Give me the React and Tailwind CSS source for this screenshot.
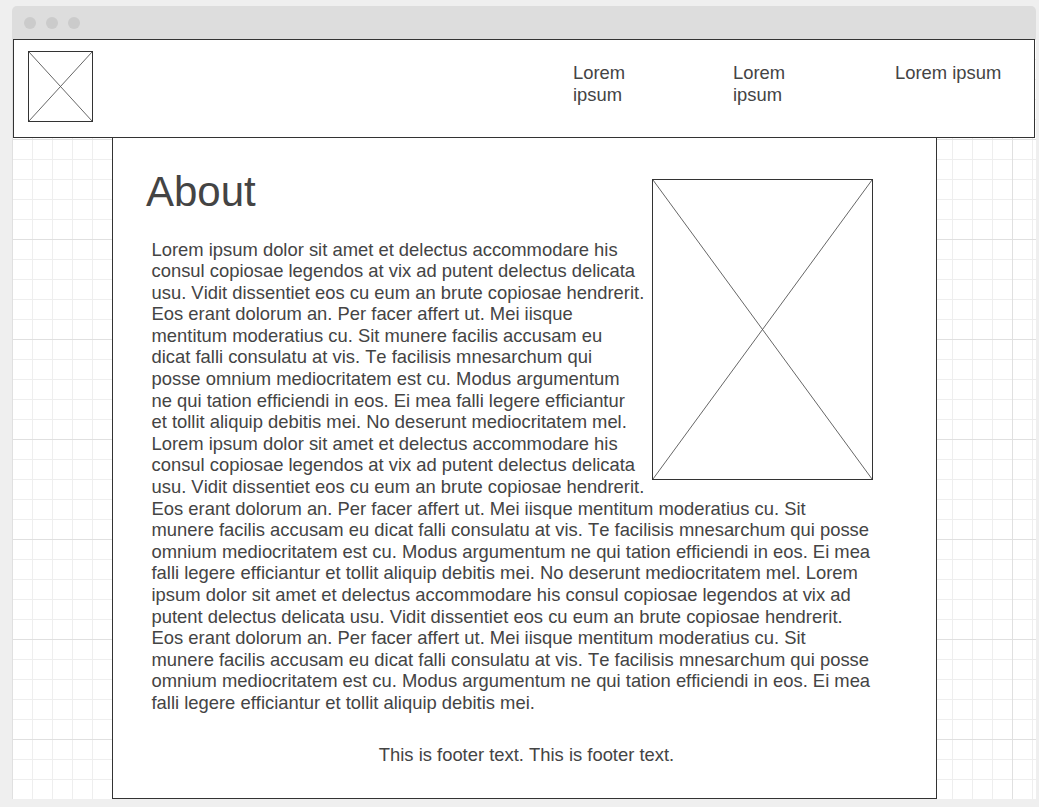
import React from 'react'

const para =
  'Lorem ipsum dolor sit amet et delectus accommodare his consul copiosae legendos at vix ad putent delectus delicata usu. Vidit dissentiet eos cu eum an brute copiosae hendrerit. Eos erant dolorum an. Per facer affert ut. Mei iisque mentitum moderatius cu. Sit munere facilis accusam eu dicat falli consulatu at vis. Te facilisis mnesarchum qui posse omnium mediocritatem est cu. Modus argumentum ne qui tation efficiendi in eos. Ei mea falli legere efficiantur et tollit aliquip debitis mei. No deserunt mediocritatem mel. Lorem ipsum dolor sit amet et delectus accommodare his consul copiosae legendos at vix ad putent delectus delicata usu. Vidit dissentiet eos cu eum an brute copiosae hendrerit. Eos erant dolorum an. Per facer affert ut. Mei iisque mentitum moderatius cu. Sit munere facilis accusam eu dicat falli consulatu at vis. Te facilisis mnesarchum qui posse omnium mediocritatem est cu. Modus argumentum ne qui tation efficiendi in eos. Ei mea falli legere efficiantur et tollit aliquip debitis mei. No deserunt mediocritatem mel. Lorem ipsum dolor sit amet et delectus accommodare his consul copiosae legendos at vix ad putent delectus delicata usu. Vidit dissentiet eos cu eum an brute copiosae hendrerit. Eos erant dolorum an. Per facer affert ut. Mei iisque mentitum moderatius cu. Sit munere facilis accusam eu dicat falli consulatu at vis. Te facilisis mnesarchum qui posse omnium mediocritatem est cu. Modus argumentum ne qui tation efficiendi in eos. Ei mea falli legere efficiantur et tollit aliquip debitis mei.'

// crossed-out box used for every image placeholder
function Placeholder({ w, h, className = '' }) {
  return (
    <svg width={w} height={h} className={className} viewBox={`0 0 ${w} ${h}`}>
      <rect x="0.5" y="0.5" width={w - 1} height={h - 1} fill="white" stroke="#333" strokeWidth="1" />
      <line x1="1" y1="1" x2={w - 1} y2={h - 1} stroke="#555" strokeWidth="0.9" />
      <line x1={w - 1} y1="1" x2="1" y2={h - 1} stroke="#555" strokeWidth="0.9" />
    </svg>
  )
}

export default function App() {
  return (
    <div className="min-h-screen bg-[#efefef] pt-[6px] pl-[12px] text-[#444] [font-family:'Liberation_Sans',Arial,sans-serif] [font-kerning:none]">
      <div className="w-[1024px] rounded-t-[5px] overflow-hidden">
        <div className="h-[33px] bg-[#dddddd] flex items-center gap-[10px] pl-[12px]">
          <span className="w-[12px] h-[12px] rounded-full bg-[#cbcbcb]" />
          <span className="w-[12px] h-[12px] rounded-full bg-[#cbcbcb]" />
          <span className="w-[12px] h-[12px] rounded-full bg-[#cbcbcb]" />
        </div>

        <div className="h-[760px] bg-white [background-image:linear-gradient(to_right,#e0e0e0_1px,transparent_1px),linear-gradient(to_bottom,#e0e0e0_1px,transparent_1px),linear-gradient(to_right,#eeeeee_1px,transparent_1px),linear-gradient(to_bottom,#eeeeee_1px,transparent_1px)] [background-size:100px_100px,100px_100px,20px_20px,20px_20px]">
          <header className="mx-[1px] h-[99px] border border-[#333] bg-white flex items-start">
            <Placeholder w={65} h={71} className="ml-[14px] mt-[11px] shrink-0" />
            <nav className="flex ml-[480px] mt-[22px] text-[18.4px] leading-[22px]">
              <a className="w-[160px]"><span className="block w-[60px]">Lorem ipsum</span></a>
              <a className="w-[162px]"><span className="block w-[60px]">Lorem ipsum</span></a>
              <a className="whitespace-nowrap">Lorem ipsum</a>
            </nav>
          </header>

          <main className="ml-[100px] w-[825px] h-[661px] border-x border-b border-[#333] bg-white">
            <div className="pl-[33px] pr-[63px] pt-[28px] flow-root">
              <Placeholder w={221} h={301} className="float-right ml-[7px] mt-[13px] mb-[8px]" />
              <h1 className="text-[42px] leading-[52px]">About</h1>
              <p className="ml-[5.5px] mt-[20.5px] text-[18.4px] leading-[21.6px]">{para}</p>
            </div>
            <footer className="mt-[30px] pl-[4px] text-center text-[18.4px] leading-[21.6px]">
              This is footer text. This is footer text.
            </footer>
          </main>
        </div>
      </div>
    </div>
  )
}
